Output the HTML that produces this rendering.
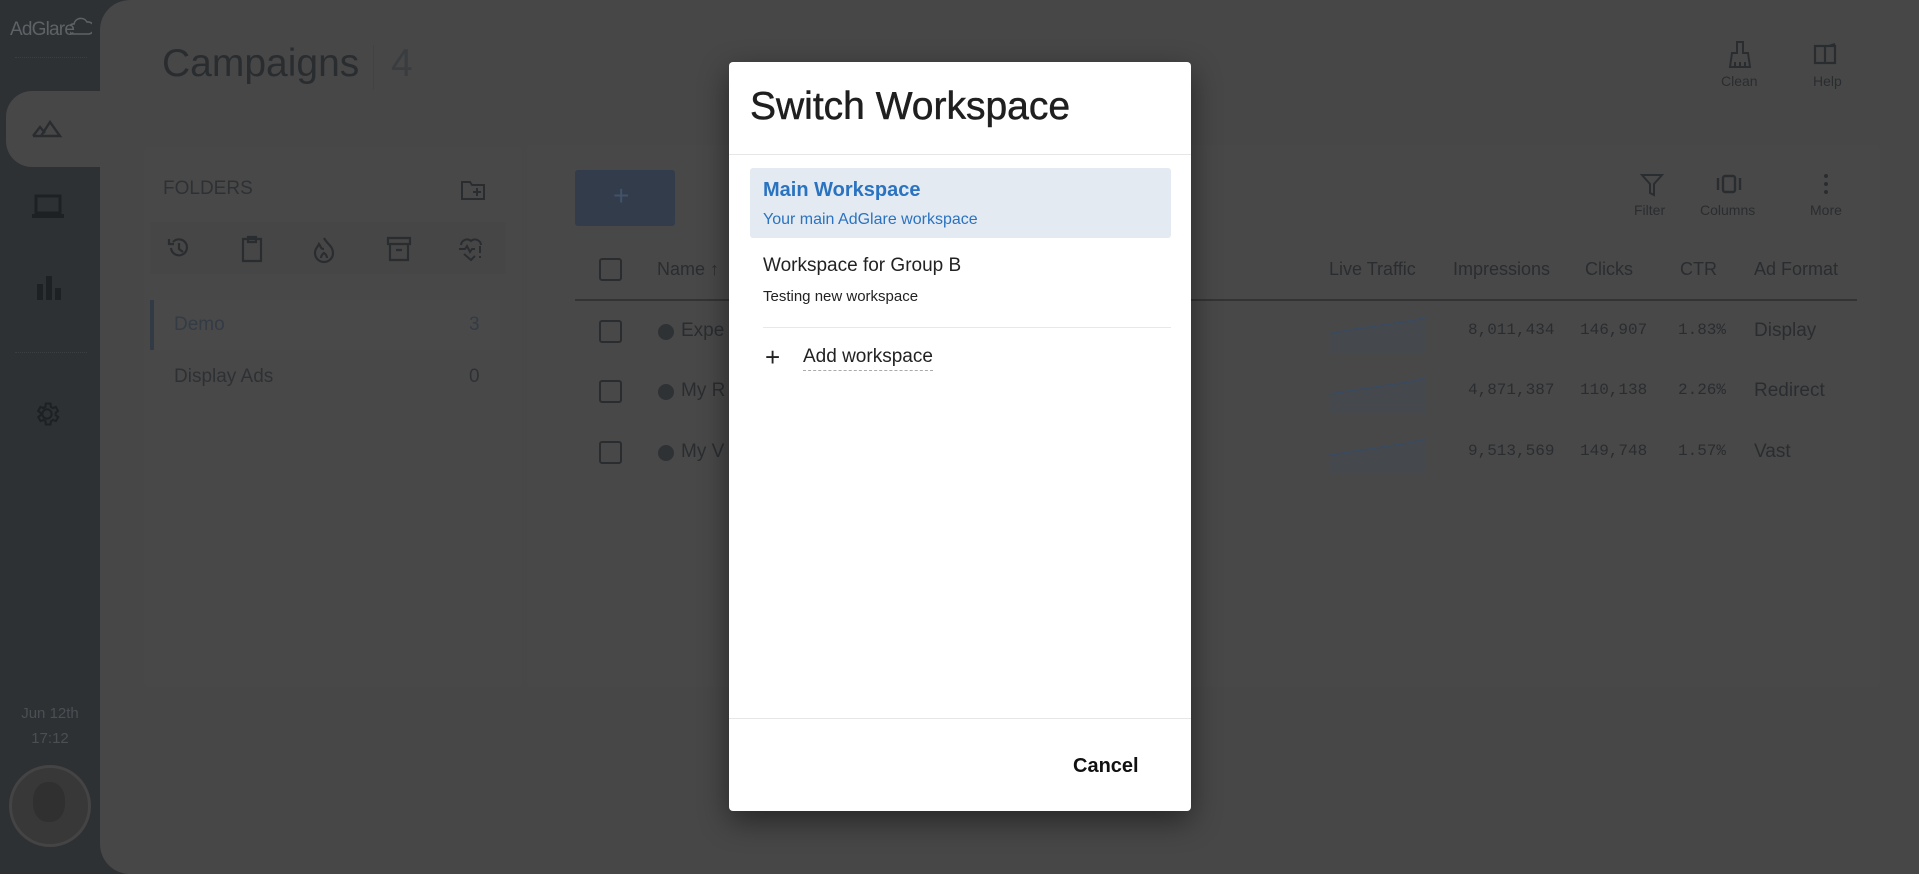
<!DOCTYPE html>
<html><head><meta charset="utf-8"><style>
*{margin:0;padding:0;box-sizing:border-box}
body{width:1919px;height:874px;overflow:hidden;background:#2e3134;font-family:"Liberation Sans",sans-serif;position:relative}
.abs{position:absolute}
.main{left:100px;top:0;width:1819px;height:874px;background:#474747;border-radius:30px 0 0 30px}
.tab{left:6px;top:91px;width:120px;height:76px;background:#474747;border-radius:26px 0 0 26px}
.t{position:absolute;white-space:nowrap}
.card{position:absolute;background:#484848;border-radius:4px}
.g{color:#2a2d30}
.mono{font-family:"Liberation Mono",monospace}
.cb{position:absolute;width:23px;height:23px;border:2.5px solid #2a2d30;border-radius:3px}
.dot{position:absolute;width:16px;height:16px;border-radius:50%;background:#2f3235}
.modal{left:729px;top:62px;width:462px;height:749px;background:#fff;border-radius:4px;box-shadow:0 10px 30px rgba(0,0,0,.45)}
</style></head><body>
<div class="abs main"></div>
<div class="abs tab"></div>
<div class="t" style="left:10px;top:19px;font-size:19px;letter-spacing:-0.8px;color:#5d6266">AdGlare</div>
<svg class="abs" style="left:70px;top:14px" width="22" height="22"><path d="M3 20 a5 5 0 0 1 1-10 a7 7 0 0 1 13-2 a6 6 0 0 1 2 12 z" fill="none" stroke="#5d6266" stroke-width="1.6"/></svg>
<div class="abs" style="left:15px;top:57px;width:72px;border-top:1px dotted #3b3f42"></div>
<svg class="abs" style="left:31px;top:117px" width="32" height="22"><path d="M2 19 L9 10 L14 16 M10 19 L19 5 L29 19 Z M2 19 H29" fill="none" stroke="#2a2d30" stroke-width="2.4"/></svg>
<svg class="abs" style="left:31px;top:194px" width="34" height="26"><rect x="5" y="2" width="24" height="17" fill="none" stroke="#1e2124" stroke-width="3"/><rect x="1" y="20" width="32" height="4" fill="#1e2124"/></svg>
<svg class="abs" style="left:37px;top:274px" width="24" height="26"><rect x="0" y="10" width="6" height="16" fill="#1e2124"/><rect x="9" y="2" width="6" height="24" fill="#1e2124"/><rect x="18" y="14" width="6" height="12" fill="#1e2124"/></svg>
<div class="abs" style="left:15px;top:352px;width:72px;border-top:1px dotted #3b3f42"></div>
<svg class="abs" style="left:33px;top:400px" width="28" height="28" viewBox="0 0 24 24"><path d="M12 8a4 4 0 1 0 0 8a4 4 0 1 0 0-8zM19.4 13a7.5 7.5 0 0 0 0-2l2.1-1.6-2-3.5-2.5 1a7 7 0 0 0-1.7-1L15 3h-4l-.4 2.9a7 7 0 0 0-1.7 1l-2.5-1-2 3.5L6.6 11a7.5 7.5 0 0 0 0 2l-2.1 1.6 2 3.5 2.5-1a7 7 0 0 0 1.7 1L11 21h4l.4-2.9a7 7 0 0 0 1.7-1l2.5 1 2-3.5z" fill="none" stroke="#1e2124" stroke-width="1.8"/></svg>
<div class="t" style="left:0;width:100px;text-align:center;top:705px;font-size:15px;color:#4a4f53">Jun 12th</div>
<div class="t" style="left:0;width:100px;text-align:center;top:730px;font-size:15px;color:#4a4f53">17:12</div>
<div class="abs" style="left:9px;top:765px;width:82px;height:82px;border-radius:50%;background:#383838;border:3px solid #444"></div>
<div class="abs" style="left:33px;top:782px;width:32px;height:40px;border-radius:45%;background:#303030"></div>

<div class="card" style="left:132px;top:14px;width:1752px;height:105px;background:#474747"></div>
<div class="t g" style="left:162px;top:42px;font-size:39px">Campaigns</div>
<div class="abs" style="left:373px;top:45px;height:45px;border-left:1px solid #424242"></div>
<div class="t" style="left:391px;top:42px;font-size:39px;color:#3a3d40">4</div>
<svg class="abs" style="left:1727px;top:40px" width="26" height="30"><path d="M10 2h6v11h5l2 14H3l2-14h5z M8 22v5 M13 22v5 M18 22v5" fill="none" stroke="#2a2d30" stroke-width="2"/></svg>
<div class="t g" style="left:1721px;top:73px;font-size:14px">Clean</div>
<svg class="abs" style="left:1813px;top:43px" width="26" height="22"><path d="M2 3h10v17H2z M12 3h10v17H12z M16 3 L22 1" fill="none" stroke="#2a2d30" stroke-width="2.2"/></svg>
<div class="t g" style="left:1813px;top:73px;font-size:14px">Help</div>

<div class="card" style="left:144px;top:147px;width:378px;height:540px"></div>
<div class="t" style="left:163px;top:178px;font-size:19px;color:#2e3134">FOLDERS</div>
<svg class="abs" style="left:460px;top:179px" width="26" height="22"><path d="M2 3h8l2 3h12v14H2z M17 9v8 M13 13h8" fill="none" stroke="#2a2d30" stroke-width="2"/></svg>
<div class="abs" style="left:150px;top:222px;width:356px;height:52px;background:#464646"></div>
<svg class="abs" style="left:166px;top:235px" width="26" height="26"><path d="M5 13a8 8 0 1 0 2-6 M3 4v5h5 M13 8v6l4 3" fill="none" stroke="#2a2d30" stroke-width="2.2"/></svg>
<svg class="abs" style="left:240px;top:235px" width="24" height="28"><path d="M3 4h18v22H3z M8 2h8v5H8z" fill="none" stroke="#2a2d30" stroke-width="2.2"/></svg>
<svg class="abs" style="left:312px;top:236px" width="24" height="28"><path d="M12 2c3 6 9 8 9 15a9 9 0 0 1-18 0c0-5 3-6 4-9 2 2 1 5 5 5 M9 22c0-3 3-5 3-5s3 2 3 5" fill="none" stroke="#2a2d30" stroke-width="2.2"/></svg>
<svg class="abs" style="left:386px;top:236px" width="26" height="26"><path d="M2 2h22v6H2z M4 8v16h18V8 M10 14h6" fill="none" stroke="#2a2d30" stroke-width="2.2"/></svg>
<svg class="abs" style="left:457px;top:236px" width="28" height="26"><path d="M4 9a6 6 0 0 1 10-4a6 6 0 0 1 10 4 M2 13h6l2-3 3 6 2-3h3 M7 18l7 6 4-4 M23 10v7 M23 20v2" fill="none" stroke="#2a2d30" stroke-width="2"/></svg>
<div class="abs" style="left:150px;top:300px;width:4px;height:50px;background:#323a45"></div>
<div class="abs" style="left:154px;top:300px;width:346px;height:50px;background:#494949"></div>
<div class="t" style="left:174px;top:314px;font-size:19px;color:#333b45">Demo</div>
<div class="t" style="left:469px;top:314px;font-size:19px;color:#333b45">3</div>
<div class="t" style="left:174px;top:366px;font-size:19px;color:#2e3134">Display Ads</div>
<div class="t" style="left:469px;top:366px;font-size:19px;color:#2e3134">0</div>

<div class="card" style="left:527px;top:145px;width:1353px;height:542px"></div>
<div class="abs" style="left:575px;top:170px;width:100px;height:56px;background:#323c4a;border-radius:3px"></div>
<div class="t" style="left:613px;top:180px;font-size:28px;color:#42526a">+</div>
<svg class="abs" style="left:1640px;top:173px" width="24" height="24"><path d="M2 2h20l-8 9v11l-4-2v-9z" fill="none" stroke="#2a2d30" stroke-width="2"/></svg>
<div class="t g" style="left:1634px;top:202px;font-size:14px">Filter</div>
<svg class="abs" style="left:1715px;top:174px" width="28" height="20"><rect x="8" y="2" width="12" height="16" rx="2" fill="none" stroke="#2a2d30" stroke-width="2.4"/><path d="M3 4v12 M25 4v12" stroke="#2a2d30" stroke-width="2.4"/></svg>
<div class="t g" style="left:1700px;top:202px;font-size:14px">Columns</div>
<svg class="abs" style="left:1822px;top:173px" width="8" height="22"><circle cx="4" cy="3" r="2" fill="#2a2d30"/><circle cx="4" cy="11" r="2" fill="#2a2d30"/><circle cx="4" cy="19" r="2" fill="#2a2d30"/></svg>
<div class="t g" style="left:1810px;top:202px;font-size:14px">More</div>

<div class="cb" style="left:599px;top:258px"></div>
<div class="t g" style="left:657px;top:259px;font-size:18px">Name ↑</div>
<div class="t g" style="left:1329px;top:259px;font-size:18px">Live Traffic</div>
<div class="t g" style="left:1453px;top:259px;font-size:18px">Impressions</div>
<div class="t g" style="left:1585px;top:259px;font-size:18px">Clicks</div>
<div class="t g" style="left:1680px;top:259px;font-size:18px">CTR</div>
<div class="t g" style="left:1754px;top:259px;font-size:18px">Ad Format</div>
<div class="abs" style="left:575px;top:299px;width:1282px;border-top:2px solid #333"></div>

<div class="cb" style="left:599px;top:320px"></div><div class="dot" style="left:658px;top:324px"></div>
<div class="t g" style="left:681px;top:320px;font-size:19px">Expe</div>
<svg class="abs" style="left:1329px;top:315px" width="96" height="38"><polygon points="0,19 20,15 40,12 60,9 80,6 96,3 96,38 0,38" fill="#45484c"/><polyline points="0,19 20,15 40,12 60,9 80,6 96,3" fill="none" stroke="#3a4a60" stroke-width="1.5"/></svg>
<div class="t mono g" style="left:1468px;top:321px;font-size:16px">8,011,434</div>
<div class="t mono g" style="left:1580px;top:321px;font-size:16px">146,907</div>
<div class="t mono g" style="left:1678px;top:321px;font-size:16px">1.83%</div>
<div class="t g" style="left:1754px;top:320px;font-size:19px">Display</div>

<div class="cb" style="left:599px;top:380px"></div><div class="dot" style="left:658px;top:384px"></div>
<div class="t g" style="left:681px;top:380px;font-size:19px">My R</div>
<svg class="abs" style="left:1329px;top:375px" width="96" height="38"><polygon points="0,19 20,16 40,13 60,10 80,7 96,3 96,38 0,38" fill="#45484c"/><polyline points="0,19 20,16 40,13 60,10 80,7 96,3" fill="none" stroke="#3a4a60" stroke-width="1.5"/></svg>
<div class="t mono g" style="left:1468px;top:381px;font-size:16px">4,871,387</div>
<div class="t mono g" style="left:1580px;top:381px;font-size:16px">110,138</div>
<div class="t mono g" style="left:1678px;top:381px;font-size:16px">2.26%</div>
<div class="t g" style="left:1754px;top:380px;font-size:19px">Redirect</div>

<div class="cb" style="left:599px;top:441px"></div><div class="dot" style="left:658px;top:445px"></div>
<div class="t g" style="left:681px;top:441px;font-size:19px">My V</div>
<svg class="abs" style="left:1329px;top:436px" width="96" height="38"><polygon points="0,19 20,16 40,13 60,10 80,7 96,3 96,38 0,38" fill="#45484c"/><polyline points="0,19 20,16 40,13 60,10 80,7 96,3" fill="none" stroke="#3a4a60" stroke-width="1.5"/></svg>
<div class="t mono g" style="left:1468px;top:442px;font-size:16px">9,513,569</div>
<div class="t mono g" style="left:1580px;top:442px;font-size:16px">149,748</div>
<div class="t mono g" style="left:1678px;top:442px;font-size:16px">1.57%</div>
<div class="t g" style="left:1754px;top:441px;font-size:19px">Vast</div>

<div class="abs modal">
  <div class="t" style="left:21px;top:23px;font-size:39px;color:#1f1f1f;-webkit-text-stroke:0.5px #1f1f1f">Switch Workspace</div>
  <div class="abs" style="left:0;top:92px;width:462px;border-top:1px solid #e6e6e6"></div>
  <div class="abs" style="left:21px;top:106px;width:421px;height:70px;background:#e4eaf1;border-radius:3px"></div>
  <div class="t" style="left:34px;top:117px;font-size:20px;font-weight:bold;color:#2a73c0">Main Workspace</div>
  <div class="t" style="left:34px;top:149px;font-size:16px;color:#2a73c0">Your main AdGlare workspace</div>
  <div class="t" style="left:34px;top:193px;font-size:19px;color:#222">Workspace for Group B</div>
  <div class="t" style="left:34px;top:226px;font-size:15px;color:#222">Testing new workspace</div>
  <div class="abs" style="left:34px;top:265px;width:408px;border-top:1px solid #e8e8e8"></div>
  <div class="t" style="left:36px;top:280px;font-size:26px;color:#222">+</div>
  <div class="t" style="left:74px;top:284px;font-size:19px;color:#222;border-bottom:1px dashed #aaa;padding-bottom:2px">Add workspace</div>
  <div class="abs" style="left:0;top:656px;width:462px;border-top:1px solid #e6e6e6"></div>
  <div class="t" style="left:344px;top:693px;font-size:20px;font-weight:bold;color:#111">Cancel</div>
</div>
</body></html>
